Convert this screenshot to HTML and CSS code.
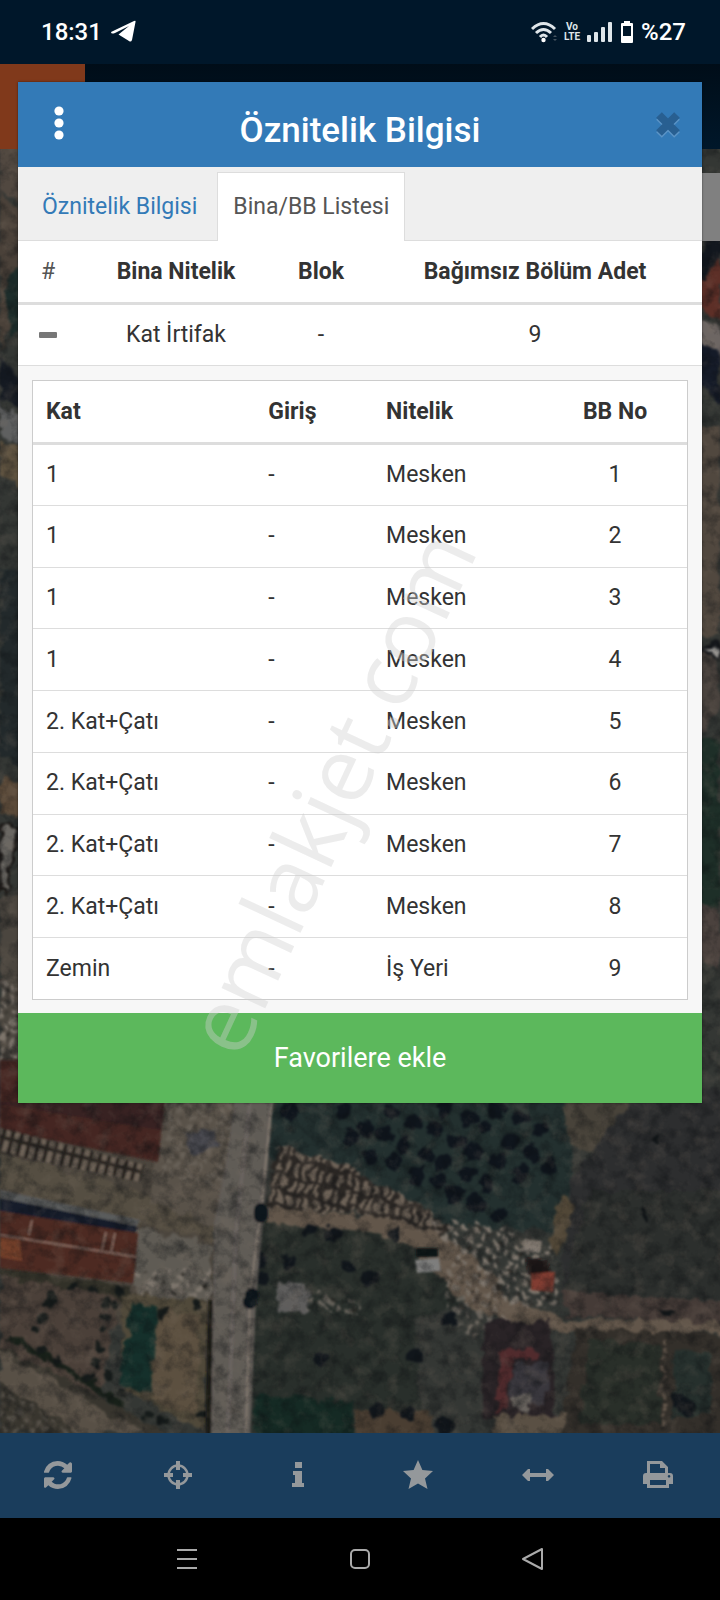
FILE: index.html
```html
<!DOCTYPE html>
<html lang="tr">
<head>
<meta charset="utf-8">
<meta name="viewport" content="width=device-width, initial-scale=1">
<title>Öznitelik Bilgisi</title>
<link rel="stylesheet" href="styles.css">
</head>
<body>
<header class="status">
    <span class="clock">18:31</span>
    <svg class="telegram" width="26" height="24" viewBox="0 0 26 24"><path d="M1 12L24 1Q26 0 25.500 2L22 20Q21 22.500 19 21L8.500 14.500L19 6L5 13Q1 14.500 1 12Z"/></svg>
    <div class="status-right">
        <svg width="26" height="22" viewBox="0 0 26 22"><g fill="none" stroke="#dfe6ea" stroke-width="3"><path d="M1 8Q12.500-3 24 8"/><path d="M5 12Q12.500 5 20 12"/><path d="M9 16Q12.500 12 16 16"/></g><circle cx="12.500" cy="19" r="2.200" fill="#fff"/><path d="M22 16l2-2 2 2zM22 18l2 2 2-2z" fill="#44535e"/></svg>
        <span class="volte"><b>Vo</b><b>LTE</b></span>
        <svg width="26" height="22" viewBox="0 0 26 22" fill="#dfe6ea"><rect y="14" width="4" height="7" rx="1"/><rect x="7" y="11" width="4" height="10" rx="1"/><rect x="14" y="6" width="4" height="15" rx="1"/><rect x="21" y="1" width="4" height="20" rx="1"/></svg>
        <svg class="battery" width="14" height="22" viewBox="0 0 14 22"><path d="M4 0h6v2h2q1 0 1 1v18q0 1-1 1H2q-1 0-1-1V3q0-1 1-1h2zM3 5v10h8V5z" fill="#fff" fill-rule="evenodd"/></svg>
        <span class="percent">%27</span>
    </div>
</header>

<main class="app">
    <svg class="map" viewBox="0 64 720 1369" preserveAspectRatio="xMidYMin slice">
        <defs>
            <pattern id="piles" width="9" height="16" patternUnits="userSpaceOnUse" patternTransform="rotate(14)">
                <rect width="9" height="16" fill="#2b2724"/>
                <rect x="1" y="1" width="5" height="12" rx="1" fill="#6d6257"/>
            </pattern>
            <pattern id="rubble" width="23" height="19" patternUnits="userSpaceOnUse" patternTransform="rotate(31)">
                <path d="M1 4l5-3 4 4-4 3zM12 2l6 1-1 5-5-2zM3 12l6-1 3 5-6 2zM15 11l5 1 1 5-5-1z" fill="#7d756c"/>
                <path d="M9 8l3 1-1 3-3-1zM19 7l3 1-1 3z" fill="#26231f"/>
            </pattern>
            <filter id="grain" x="0" y="0" width="100%" height="100%" color-interpolation-filters="sRGB">
                <feTurbulence type="fractalNoise" baseFrequency="0.07" numOctaves="4" seed="7"/>
                <feColorMatrix values="0 0 0 0 0.040  0 0 0 0 0.050  0 0 0 0 0.060  2 0 0 0 -0.850"/>
            </filter>
            <filter id="light" x="0" y="0" width="100%" height="100%" color-interpolation-filters="sRGB">
                <feTurbulence type="fractalNoise" baseFrequency="0.06" numOctaves="4" seed="21"/>
                <feColorMatrix values="0 0 0 0 0.500  0 0 0 0 0.450  0 0 0 0 0.400  0 2 0 0 -1"/>
            </filter>
            <!-- roughens the outlines of fields, roofs and trees -->
            <filter id="rough" color-interpolation-filters="sRGB">
                <feTurbulence type="fractalNoise" baseFrequency="0.07" numOctaves="3" seed="4" result="n"/>
                <feDisplacementMap in="SourceGraphic" in2="n" scale="14" xChannelSelector="R" yChannelSelector="G"/>
                <feGaussianBlur stdDeviation="1"/>
            </filter>
            <filter id="soft"><feGaussianBlur stdDeviation="1"/></filter>
        </defs>
        <g filter="url(#rough)">
        <rect y="40" width="720" height="1420" fill="#343734"/>
        <!-- left edge -->
        <path d="M0 140h25v65L0 190z" fill="#514840"/>
        <path d="M0 190l25 30v70l-25 60z" fill="#4a4139"/>
        <path d="M5 290l20-40v80l-15 10z" fill="#1d2d2b"/>
        <path d="M0 355l25 30v25L0 400z" fill="#151a22"/>
        <path d="M0 405l25 12v30L0 435z" fill="#5f6060"/>
        <path d="M0 440l25 10v38L0 475z" fill="#5f5340"/>
        <path d="M0 570h25v200l-25-15z" fill="#22292b"/>
        <path d="M0 775l25 12v32L0 812z" fill="#5b4a39"/>
        <path d="M0 825l18 3-12 65-6-4z" fill="#6a6762" stroke="#1b1816" stroke-width="3"/>
        <path d="M0 895h25v170L0 1075z" fill="#4b463f"/>
        <path d="M0 980h25v85H0z" fill="url(#rubble)"/>
        <!-- right edge -->
        <path d="M695 260l25-30v30l-25 30z" fill="#12171e"/>
        <path d="M695 290l25-30v60l-25-15z" fill="#5d2f27"/>
        <path d="M695 310l25 18v40l-25-20z" fill="#6d6663"/>
        <path d="M695 335l25 18v50l-25-20z" fill="#151b28"/>
        <path d="M695 425h25v210h-25z" fill="#51483f"/>
        <path d="M695 655l25-5v60l-25 30z" fill="#4a433e"/>
        <path d="M703 650l9-8 8 4v12l-8-2z" fill="#9a9895" stroke="#15171b" stroke-width="3"/>
        <path d="M695 740h25v190h-25z" fill="#1e2f28"/>
        <path d="M695 900l25 10v60l-25-20z" fill="#4b423e"/>
        <!-- fields west of the road -->
        <path d="M0 1095l215 10v260L0 1280z" fill="#4b453d"/>
        <path d="M0 1152l215 60v30L0 1190z" fill="#554e42"/>
        <path d="M165 1100h75l-15 130-75-30z" fill="#595249"/>
        <path d="M165 1100h75l-15 90-65-15z" fill="url(#rubble)" opacity=".4"/>
        <path d="M185 1132l25-4 8 20-28 6z" fill="#4a4a50"/>
        <path d="M136 1226l76 20v55l-77-5z" fill="#5f5b54"/>
        <path d="M136 1270h75v28h-75z" fill="url(#rubble)"/>
        <path d="M0 1265l130 22v15L0 1280z" fill="#323128"/>
        <path d="M0 1276l120 22-22 105L0 1345z" fill="#4b4039"/>
        <path d="M122 1295l88 5-6 130-80-40z" fill="#50493a"/>
        <path d="M132 1303l26 4-7 85-32-7z" fill="#15302b"/>
        <path d="M158 1310l42 5-4 100-44-15z" fill="#5c5040"/>
        <path d="M0 1345l170 88H0z" fill="#38352e"/>
        <path d="M0 1350l145 83H78L0 1382z" fill="#585046"/>
        <path d="M0 1385l70 48H0z" fill="url(#rubble)" opacity=".4"/>
        <path d="M6 1335l70 40 45 30" fill="none" stroke="#182019" stroke-width="6"/>
        <g stroke="#161b1a" stroke-linecap="round" stroke-width="9">
            <path d="M48 1302h0M42 1317h0M35 1329h0M53 1298h0M72 1288h0M92 1290h0M106 1302h0M105 1317h0M104 1331h0M99 1347h0M96 1365h0M43 1350h0M58 1361h0M108 1376h0M118 1290h0M115 1305h0M122 1395h0M162 1314h0M196 1304h0M88 1379h0M148 1416h0M162 1420h0M202 1414h0"/>
        </g>
        <!-- fields east of the road -->
        <path d="M276 1090h310l-25 140-140-5-155-70z" fill="#23302f"/>
        <path d="M560 1090h90l-35 70-45-15z" fill="#48433a"/>
        <path d="M640 1090h90v210H560l10-120z" fill="#2d2e2f"/>
        <path d="M590 1190h140v110H560z" fill="#2c2f2d"/>
        <g stroke="#0f151c" stroke-linecap="round" stroke-width="17">
            <path d="M288 1112h0M345 1110h0M365 1128h0M392 1112h0M414 1122h0M445 1110h0M467 1118h0M497 1108h0M520 1118h0M382 1134h0M404 1146h0M435 1130h0M456 1142h0M484 1127h0M510 1142h0M541 1130h0M372 1158h0M394 1162h0M426 1155h0M443 1162h0M472 1150h0M499 1162h0M532 1152h0M549 1168h0M416 1177h0M438 1182h0M467 1173h0M488 1182h0M521 1174h0M455 1194h0M476 1204h0M500 1214h0M350 1138h0"/>
        </g>
        <path d="M276 1145l70 20 55 30 50 30-15 18-75-30-96-3z" fill="url(#piles)"/>
        <path d="M254 1215l110 5 60 10 50 70-60 20 8 120H250z" fill="#292f2b"/>
        <path d="M262 1208l110 8 62 16 30 15 50 55 60 18h156v12h-160l-62-8-44-20-50-56-52-16-100-9z" fill="#62564a"/>
        <path d="M430 1218l60 6 60 20 10 60-30 6-40-15-45-50z" fill="url(#rubble)"/>
        <path d="M445 1260l35 20 30 40-30 25-35-30z" fill="url(#rubble)" opacity=".7"/>
        <path d="M560 1195l15 10-18 50-8-10z" fill="#514737"/>
        <path d="M560 1290l170 12v22l-160-8z" fill="#453b37"/>
        <path d="M575 1328l155 6v106H560z" fill="#332f2a"/>
        <path d="M590 1340l70 4v80h-80z" fill="#292f29"/>
        <path d="M675 1350l35 2v60l-38 8z" fill="#26302d"/>
        <path d="M664 1340v90" stroke="#675a4e" stroke-width="3" stroke-dasharray="5 4"/>
        <path d="M485 1320l65 2 5 100-75-5z" fill="#292326"/>
        <path d="M500 1350h40v8h-28v20l-8 34h-8z" fill="#512b2d"/>
        <path d="M514 1362h34l-2 40h-36z" fill="#39373d"/>
        <path d="M510 1395l20 2-2 17-18-4z" fill="#68635e"/>
        <path d="M495 1415h70v25h-70z" fill="#5a5044"/>
        <path d="M280 1285l26-3 2 28-30 3z" fill="#5e5d5c"/>
        <path d="M306 1290l54 14v12l-54-8z" fill="url(#rubble)" opacity=".7"/>
        <path d="M254 1395l99 6v39h-99z" fill="#152a24"/>
        <path d="M355 1408l80 6v26h-80z" fill="#4a3e32"/>
        <g stroke="#11161b" stroke-linecap="round" stroke-width="15">
            <path d="M288 1262h0M258 1260h0M262 1278h0M310 1230h0M333 1234h0M350 1265h0M395 1235h0M416 1356h0M450 1320h0M322 1356h0M376 1410h0M445 1425h0M680 1400l8 8M370 1278h0M407 1412h0"/>
        </g>
        <path d="M642 1208l6 12M660 1135l-6 8M660 1312h16" stroke="#111517" stroke-width="5"/>
        </g>
        <g filter="url(#soft)">
        <!-- roofs -->
        <path d="M0 1060h18l4 42 142 6-6 54L0 1130z" fill="#442724"/>
        <path d="M3 1102h161l-3 28L0 1104z" fill="#382221"/>
        <path d="M0 1128l145 37-5 17L0 1153z" fill="url(#piles)"/>
        <path d="M0 1190l140 30-4 8L0 1199z" fill="#5a5b5c"/>
        <path d="M0 1198l137 28-3 12L0 1212z" fill="#151c2b"/>
        <path d="M0 1211l138 22-5 50L0 1268z" fill="#4d2a23"/>
        <path d="M0 1235l137 22M32 1220l-3 15M106 1232l-4 18M115 1233l-4 19" fill="none" stroke="#85695e" stroke-width="2"/>
        <path d="M0 1237l20 2 2 22-22-4z" fill="#743f2c"/>
        <path d="M415 1260l24-2 2 13-24 2z" fill="#7e7e7d"/>
        <path d="M416 1248h22v9h-22z" fill="#111317"/>
        <path d="M531 1272h24l-2 20-22-2z" fill="#813d32"/>
        <path d="M526 1258l22 2 2 12-22 2z" fill="#1b1213"/>
        <path d="M524 1239l18 2-2 12-18-2z" fill="#817971"/>
        <!-- road -->
        <path d="M208 1300h8l-4 140h-7z" fill="#1d1b19"/>
        <path d="M236 1090h38l-8 100-10 110-6 140h-39l3-217 12-60z" fill="#605b57"/>
        <path d="M272 1100l-10 100-12 95-4 138" fill="none" stroke="#82796f" stroke-width="2"/>
        <path d="M250 1102l-14 130-8 200" fill="none" stroke="#6b6561" stroke-width="3"/>
        <path d="M261 1210v6M252 1295h0M250 1302h0" stroke="#11161b" stroke-linecap="round" stroke-width="14"/>
        </g>
        <rect y="60" width="720" height="1380" filter="url(#grain)" opacity=".5"/>
        <rect y="60" width="720" height="1380" filter="url(#light)" opacity=".3"/>
    </svg>
    <div class="topbar"><div class="topbar-menu"></div></div>
    <div class="map-control"></div>

    <section class="modal">
        <div class="modal-header">
            <button class="icon-btn" aria-label="Menü"><svg width="10" height="38" viewBox="0 0 10 38" fill="#fff"><circle cx="5" cy="5" r="4.600"/><circle cx="5" cy="17" r="4.600"/><circle cx="5" cy="29" r="4.600"/></svg></button>
            <h4>Öznitelik Bilgisi</h4>
            <button class="icon-btn close" aria-label="Kapat"><svg width="24" height="28" viewBox="0 0 24 28"><g fill="none" stroke-width="8"><path d="M3 6l18 18M21 6L3 24" stroke="#5b94c6"/><path d="M3 4l18 18M21 4L3 22" stroke="#285f91"/></g></svg></button>
        </div>
        <nav class="tabs">
            <a href="#oznitelik">Öznitelik Bilgisi</a>
            <a href="#bina" class="active">Bina/BB Listesi</a>
        </nav>
        <table class="buildings">
            <thead>
                <tr><th class="c-num">#</th><th class="c-kind">Bina Nitelik</th><th class="c-block">Blok</th><th>Bağımsız Bölüm Adet</th></tr>
            </thead>
            <tbody>
                <tr><td><button class="collapse" aria-label="Daralt"></button></td><td>Kat İrtifak</td><td>-</td><td>9</td></tr>
            </tbody>
        </table>
        <div class="detail">
            <table class="units">
                <thead>
                    <tr><th class="u-floor">Kat</th><th class="u-entry">Giriş</th><th class="u-kind">Nitelik</th><th class="u-no">BB No</th></tr>
                </thead>
                <tbody>
                    <tr><td>1</td><td>-</td><td>Mesken</td><td class="u-no">1</td></tr>
                    <tr><td>1</td><td>-</td><td>Mesken</td><td class="u-no">2</td></tr>
                    <tr><td>1</td><td>-</td><td>Mesken</td><td class="u-no">3</td></tr>
                    <tr><td>1</td><td>-</td><td>Mesken</td><td class="u-no">4</td></tr>
                    <tr><td>2. Kat+Çatı</td><td>-</td><td>Mesken</td><td class="u-no">5</td></tr>
                    <tr><td>2. Kat+Çatı</td><td>-</td><td>Mesken</td><td class="u-no">6</td></tr>
                    <tr><td>2. Kat+Çatı</td><td>-</td><td>Mesken</td><td class="u-no">7</td></tr>
                    <tr><td>2. Kat+Çatı</td><td>-</td><td>Mesken</td><td class="u-no">8</td></tr>
                    <tr><td>Zemin</td><td>-</td><td>İş Yeri</td><td class="u-no">9</td></tr>
                </tbody>
            </table>
        </div>
        <button class="favorite">Favorilere ekle</button>
        <div class="watermark">emlakjet.com</div>
    </section>
</main>

<nav class="toolbar">
    <button aria-label="Yenile"><svg width="28" height="28" viewBox="0 128 1536 1536"><path d="M1511 1056q0 5-1 7-64 268-268 434.500t-478 166.500q-146 0-282.500-55t-243.500-157l-129 129q-19 19-45 19t-45-19-19-45v-448q0-26 19-45t45-19h448q26 0 45 19t19 45-19 45l-137 137q71 66 161 102t187 36q134 0 250-65t186-179q11-17 53-117 8-23 30-23h192q13 0 22.500 9.500t9.500 22.500zm25-800v448q0 26-19 45t-45 19h-448q-26 0-45-19t-19-45 19-45l138-138q-148-137-349-137-134 0-250 65t-186 179q-11 17-53 117-8 23-30 23H25q-13 0-22.500-9.500t-9.500-22.500v-7q65-268 270-434.500t480-166.500q146 0 284 55.500t245 156.500l130-129q19-19 45-19t45 19 19 45z"/></svg></button>
    <button aria-label="Konum"><svg width="28" height="28" viewBox="0 0 28 28"><circle cx="14" cy="14" r="9.500" fill="none" stroke="#94989b" stroke-width="2.500"/><path d="M12 0h4v9h-4zM12 19h4v9h-4zM0 12h9v4H0zM19 12h9v4h-9z"/></svg></button>
    <button aria-label="Bilgi"><svg width="28" height="28" viewBox="0 0 28 28"><path d="M11 1h7v6h-7zM9 10h9v12h2v4H8v-4h3v-8H9z"/></svg></button>
    <button aria-label="Favoriler"><svg width="30" height="30" viewBox="0 0 30 30"><path d="M15 0l4.400 10L30 11l-8 7.500L24.500 29 15 23.600 5.500 29 8 18.500 0 11l10.600-1z"/></svg></button>
    <button aria-label="Ölçüm"><svg width="32" height="28" viewBox="0 0 32 28"><path d="M0 14l6-6h2v4h16V8h2l6 6-6 6h-2v-4H8v4H6z"/></svg></button>
    <button aria-label="Yazdır"><svg width="30" height="28" viewBox="0 0 30 28"><path fill-rule="evenodd" d="M4 0h15l6 6v6h2q3 0 3 3v8h-4v4H4v-4H0v-8q0-3 3-3h1zM7 3v9h15V7h-5V3zM7 19v5h16v-5zM26 14a1.300 1.300 0 1 0 .1 0z"/></svg></button>
</nav>

<nav class="system">
    <button aria-label="Son uygulamalar"><svg width="24" height="24" viewBox="0 0 24 24"><path d="M2 3h20M2 12h20M2 21h20"/></svg></button>
    <button aria-label="Ana ekran"><svg width="24" height="24" viewBox="0 0 24 24"><rect x="3" y="3" width="18" height="18" rx="4"/></svg></button>
    <button aria-label="Geri"><svg width="24" height="24" viewBox="0 0 24 24"><path d="M21 2v20L2 12z" stroke-linejoin="round"/></svg></button>
</nav>
</body>
</html>
```

FILE: styles.css
```css
* {
    box-sizing: border-box;
}
body {
    margin: 0;
    min-height: 100vh;
    display: flex;
    flex-direction: column;
    font-family: Roboto, sans-serif;
    font-size: 23px;
    line-height: 34px;
    color: #333;
    background-color: #000;
}
button {
    border: none;
    padding: 0;
    background: none;
    font-family: inherit;
    display: flex;
    align-items: center;
    justify-content: center;
}

/* status bar */
.status {
    height: 64px;
    padding: 0 34px 0 41px;
    display: flex;
    align-items: center;
    gap: 8px;
    background-color: #00172a;
    color: #fff;
    font-size: 24px;
    font-weight: 500;
}
.telegram {
    fill: #fff;
}
.status-right {
    margin-left: auto;
    display: flex;
    align-items: center;
    gap: 7px;
}
.volte {
    display: flex;
    flex-direction: column;
    align-items: center;
    font-size: 10px;
    line-height: 10px;
    color: #dfe6ea;
}

/* map */
.app {
    position: relative;
    flex: 1;
    padding: 18px;
    background-color: #343734;
}
.map {
    position: absolute;
    top: 0;
    left: 0;
    width: 100%;
    height: 100%;
}
.topbar {
    position: absolute;
    top: 0;
    left: 0;
    right: 0;
    height: 85px;
    background: linear-gradient(#000d18, #00172a);
}
.topbar-menu {
    width: 85px;
    height: 85px;
    background-color: #80391b;
}
.map-control {
    position: absolute;
    top: 109px;
    right: 0;
    width: 40px;
    height: 68px;
    background-color: #808080;
}

/* modal */
.modal {
    position: relative;
    background-color: #fff;
    box-shadow: 0 0 2px rgba(0, 0, 0, .5);
}
.modal-header {
    height: 85px;
    padding: 0 22px;
    display: flex;
    align-items: center;
    justify-content: space-between;
    background-color: #337ab7;
    color: #fff;
}
.modal-header h4 {
    margin: 0;
    padding-top: 12px;
    font-size: 35px;
    font-weight: 500;
}
.icon-btn {
    width: 38px;
    height: 38px;
}
.icon-btn.close {
    justify-content: flex-end;
}
.tabs {
    display: flex;
    align-items: flex-end;
    padding-top: 5px;
    padding-left: 8px;
    background-color: #efefef;
    border-bottom: 1px solid #ddd;
}
.tabs a {
    height: 69px;
    padding: 0 15px;
    line-height: 68px;
    color: #337ab7;
    text-decoration: none;
    border: 1px solid transparent;
    border-bottom: none;
    margin-bottom: -1px;
    margin-right: 4px;
}
.tabs .active {
    color: #555;
    background-color: #fff;
    border-color: #ddd;
}

/* tables */
table {
    width: 100%;
    border-collapse: separate;
    border-spacing: 0;
    table-layout: fixed;
}
th {
    font-weight: 700;
    border-bottom: 3px solid #ddd;
}
.buildings th, .buildings td {
    height: 61px;
    padding: 0;
    text-align: center;
}
.buildings th {
    height: 64px;
}
.buildings td {
    border-bottom: 1px solid #ddd;
}
.buildings .c-num {
    width: 60px;
    font-weight: 400;
    color: #555;
}
.c-kind {
    width: 196px;
}
.c-block {
    width: 94px;
}
.collapse {
    width: 18px;
    height: 6px;
    margin: 0 auto;
    border-radius: 1px;
    background-color: #777;
}
.detail {
    padding: 14px 14px 13px;
    background-color: #f7f7f7;
}
.units {
    height: 620px;
    background-color: #fff;
    border: 1px solid #ccc;
}
.units th, .units td {
    padding: 0 13px;
    text-align: left;
}
.units th {
    height: 64px;
}
.units tr + tr td {
    border-top: 1px solid #ddd;
}
.u-floor {
    width: 34%;
}
.u-entry {
    width: 18%;
}
.u-kind {
    width: 26%;
}
.units .u-no {
    text-align: center;
}
.favorite {
    width: 100%;
    height: 90px;
    font-size: 27px;
    color: #fff;
    background-color: #5cb85c;
}
.watermark {
    position: absolute;
    top: 709px;
    left: 310px;
    font-family: "Open Sans", sans-serif;
    font-size: 90px;
    line-height: 90px;
    color: rgba(208, 208, 208, .4);
    transform: translate(-50%, -50%) rotate(-65deg);
    pointer-events: none;
}

/* bottom bars */
.toolbar {
    height: 85px;
    display: grid;
    grid-template-columns: repeat(6, 1fr);
    background-color: #1a3d5c;
}
.toolbar button {
    padding: 0 4px 2px 0;
}
.toolbar svg {
    fill: #94989b;
}
.system {
    height: 82px;
    padding: 0 100px;
    display: grid;
    grid-template-columns: repeat(3, 1fr);
}
.system svg {
    fill: none;
    stroke: #aaa;
    stroke-width: 2;
}
```
